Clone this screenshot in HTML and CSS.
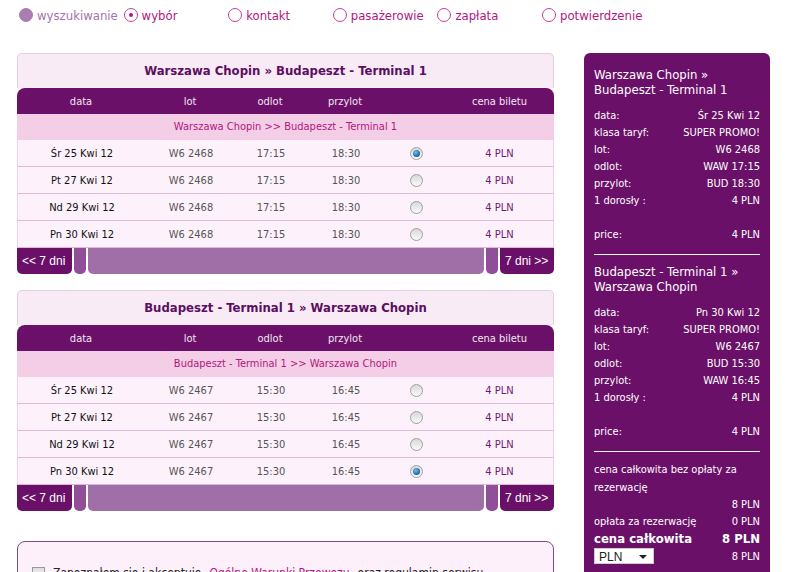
FILE: index.html
```html
<!DOCTYPE html>
<html lang="pl">
<head>
    <meta charset="UTF-8">
    <title>Wybór lotu</title>
    <link rel="stylesheet" href="styles.css">
</head>
<body>

    <!-- kroki rezerwacji -->
    <div class="steps">
        <div class="step done"><span class="dot"></span>wyszukiwanie</div>
        <div class="step active"><span class="dot"></span>wybór</div>
        <div class="step"><span class="dot"></span>kontakt</div>
        <div class="step"><span class="dot"></span>pasażerowie</div>
        <div class="step"><span class="dot"></span>zapłata</div>
        <div class="step"><span class="dot"></span>potwierdzenie</div>
    </div>

    <div class="main">
        <div class="left">

            <!-- wylot -->
            <div class="card">
                <div class="card-title">Warszawa Chopin » Budapeszt - Terminal 1</div>
                <div class="row head">
                    <div>data</div><div>lot</div><div>odlot</div><div>przylot</div><div></div><div>cena biletu</div>
                </div>
                <div class="route">Warszawa Chopin &gt;&gt; Budapeszt - Terminal 1</div>
                <div class="row">
                    <div class="date">Śr 25 Kwi 12</div><div>W6 2468</div><div>17:15</div><div>18:30</div>
                    <div><span class="radio checked"></span></div><div class="price">4 PLN</div>
                </div>
                <div class="row">
                    <div class="date">Pt 27 Kwi 12</div><div>W6 2468</div><div>17:15</div><div>18:30</div>
                    <div><span class="radio"></span></div><div class="price">4 PLN</div>
                </div>
                <div class="row">
                    <div class="date">Nd 29 Kwi 12</div><div>W6 2468</div><div>17:15</div><div>18:30</div>
                    <div><span class="radio"></span></div><div class="price">4 PLN</div>
                </div>
                <div class="row">
                    <div class="date">Pn 30 Kwi 12</div><div>W6 2468</div><div>17:15</div><div>18:30</div>
                    <div><span class="radio"></span></div><div class="price">4 PLN</div>
                </div>
                <div class="pager">
                    <a class="prev">&lt;&lt; 7 dni</a>
                    <span class="seg"></span>
                    <span class="bar"></span>
                    <span class="seg"></span>
                    <a class="next">7 dni &gt;&gt;</a>
                </div>
            </div>

            <!-- powrót -->
            <div class="card">
                <div class="card-title">Budapeszt - Terminal 1 » Warszawa Chopin</div>
                <div class="row head">
                    <div>data</div><div>lot</div><div>odlot</div><div>przylot</div><div></div><div>cena biletu</div>
                </div>
                <div class="route">Budapeszt - Terminal 1 &gt;&gt; Warszawa Chopin</div>
                <div class="row">
                    <div class="date">Śr 25 Kwi 12</div><div>W6 2467</div><div>15:30</div><div>16:45</div>
                    <div><span class="radio"></span></div><div class="price">4 PLN</div>
                </div>
                <div class="row">
                    <div class="date">Pt 27 Kwi 12</div><div>W6 2467</div><div>15:30</div><div>16:45</div>
                    <div><span class="radio"></span></div><div class="price">4 PLN</div>
                </div>
                <div class="row">
                    <div class="date">Nd 29 Kwi 12</div><div>W6 2467</div><div>15:30</div><div>16:45</div>
                    <div><span class="radio"></span></div><div class="price">4 PLN</div>
                </div>
                <div class="row">
                    <div class="date">Pn 30 Kwi 12</div><div>W6 2467</div><div>15:30</div><div>16:45</div>
                    <div><span class="radio checked"></span></div><div class="price">4 PLN</div>
                </div>
                <div class="pager">
                    <a class="prev">&lt;&lt; 7 dni</a>
                    <span class="seg"></span>
                    <span class="bar"></span>
                    <span class="seg"></span>
                    <a class="next">7 dni &gt;&gt;</a>
                </div>
            </div>

            <!-- warunki -->
            <div class="terms">
                <label><span class="check"></span>Zapoznałem się i akceptuję <span class="link">Ogólne Warunki Przewozu</span> oraz regulamin serwisu</label>
            </div>
        </div>

        <!-- podsumowanie -->
        <div class="summary">
            <div class="sum-title">Warszawa Chopin » Budapeszt - Terminal 1</div>
            <div class="sum-row"><span>data:</span><span>Śr 25 Kwi 12</span></div>
            <div class="sum-row"><span>klasa taryf:</span><span>SUPER PROMO!</span></div>
            <div class="sum-row"><span>lot:</span><span>W6 2468</span></div>
            <div class="sum-row"><span>odlot:</span><span>WAW 17:15</span></div>
            <div class="sum-row"><span>przylot:</span><span>BUD 18:30</span></div>
            <div class="sum-row"><span>1 dorosły :</span><span>4 PLN</span></div>
            <div class="sum-row"><span>&nbsp;</span></div>
            <div class="sum-row"><span>price:</span><span>4 PLN</span></div>
            <hr>
            <div class="sum-title">Budapeszt - Terminal 1 » Warszawa Chopin</div>
            <div class="sum-row"><span>data:</span><span>Pn 30 Kwi 12</span></div>
            <div class="sum-row"><span>klasa taryf:</span><span>SUPER PROMO!</span></div>
            <div class="sum-row"><span>lot:</span><span>W6 2467</span></div>
            <div class="sum-row"><span>odlot:</span><span>BUD 15:30</span></div>
            <div class="sum-row"><span>przylot:</span><span>WAW 16:45</span></div>
            <div class="sum-row"><span>1 dorosły :</span><span>4 PLN</span></div>
            <div class="sum-row"><span>&nbsp;</span></div>
            <div class="sum-row"><span>price:</span><span>4 PLN</span></div>
            <hr>
            <div class="total-note">cena całkowita bez opłaty za rezerwację</div>
            <div class="sum-row right"><span>8 PLN</span></div>
            <div class="sum-row"><span>opłata za rezerwację</span><span>0 PLN</span></div>
            <div class="sum-row total"><span>cena całkowita</span><span>8 PLN</span></div>
            <div class="sum-row"><span class="currency">PLN<i class="caret"></i></span><span>8 PLN</span></div>
        </div>
    </div>

</body>
</html>
```

FILE: styles.css
```css
body {
    margin: 0;
    font-family: Tahoma, "DejaVu Sans Condensed", "DejaVu Sans", sans-serif;
    font-size: 11px;
    background-color: #fff;
    color: #222;
}

/* kroki */
.steps {
    display: flex;
    align-items: flex-start;
    padding: 7px 0 0 19px;
    height: 53px;
    box-sizing: border-box;
}
.step {
    width: 104.6px;
    height: 16px;
    flex: none;
    display: flex;
    align-items: center;
    white-space: nowrap;
    font-size: 13px;
    color: #b2177f;
}
.step .dot {
    width: 12px;
    height: 12px;
    border: 1px solid #c4409c;
    border-radius: 50%;
    margin-right: 4px;
    flex: none;
    position: relative;
}
.step.done {
    color: #a274aa;
}
.step.done .dot {
    background-color: #a97db1;
    border-color: #a97db1;
}
.step.active .dot::after {
    content: "";
    position: absolute;
    left: 4px;
    top: 4px;
    width: 4px;
    height: 4px;
    border-radius: 50%;
    background-color: #b2177f;
}

.main {
    display: flex;
    gap: 30px;
    padding-left: 17px;
}
.left {
    width: 537px;
    flex: none;
}

/* karta lotu */
.card {
    margin-bottom: 16px;
}
.card-title {
    height: 34px;
    line-height: 34px;
    text-align: center;
    font-size: 13px;
    font-weight: bold;
    color: #5c0f5e;
    background-color: #f8ebf6;
    border: 1px solid #e3cfe0;
    border-bottom: none;
    border-radius: 5px 5px 0 0;
}
.row {
    display: grid;
    grid-template-columns: 128px 90px 70px 80px 60px 1fr;
    height: 26px;
    align-items: center;
    text-align: center;
    color: #555;
    background-color: #fdf2fb;
    border-left: 1px solid #ead4e6;
    border-right: 1px solid #ead4e6;
    border-bottom: 1px solid #dcbad7;
}
.row.head {
    background-color: #6a1068;
    color: #f3e6f2;
    border: none;
    border-radius: 8px 8px 0 0;
}
.row .date {
    color: #111;
}
.row .price {
    color: #6e1a6c;
}
.route {
    height: 26px;
    line-height: 26px;
    text-align: center;
    background-color: #f4cde6;
    color: #b2177f;
}
.radio {
    display: inline-block;
    width: 11px;
    height: 11px;
    border: 1px solid #a0a0a0;
    border-radius: 50%;
    background: linear-gradient(#d8d8d8, #fafafa);
    vertical-align: middle;
    position: relative;
}
.radio.checked::after {
    content: "";
    position: absolute;
    left: 2px;
    top: 2px;
    width: 7px;
    height: 7px;
    border-radius: 50%;
    background: radial-gradient(circle at 40% 35%, #6ec0f0, #1d5f9a 70%);
}

.pager {
    display: flex;
    gap: 2px;
    height: 26px;
}
.pager a {
    background-color: #6a1068;
    color: #fff;
    font-family: "Liberation Sans", Arial, sans-serif;
    font-size: 12px;
    line-height: 26px;
    padding: 0 5px;
    box-sizing: border-box;
}
.pager .prev {
    width: 55px;
    border-radius: 0 0 5px 5px;
}
.pager .next {
    width: 54px;
    border-radius: 0 0 5px 5px;
}
.pager .seg {
    width: 12px;
    background-color: #924f99;
    border-radius: 0 0 5px 5px;
}
.pager .bar {
    flex: 1;
    background-color: #a06fa7;
    border-radius: 0 0 5px 5px;
}

/* warunki */
.terms {
    margin-top: 30px;
    border: 1px solid #7b4f82;
    border-radius: 8px;
    background-color: #fdf0fb;
    padding: 24px 14px 20px;
    font-size: 12px;
}
.terms label {
    display: flex;
    align-items: center;
    gap: 8px;
}
.check {
    width: 11px;
    height: 11px;
    border: 1px solid #999;
    background: linear-gradient(#ddd, #fff);
}
.link {
    color: #b2177f;
}

/* podsumowanie */
.summary {
    width: 166px;
    flex: none;
    background-color: #6a1068;
    color: #fff;
    padding: 14px 10px 30px;
    border-radius: 6px 6px 0 0;
}
.sum-title {
    font-size: 13px;
    line-height: 15px;
    margin-bottom: 10px;
}
.sum-row {
    display: flex;
    justify-content: space-between;
    line-height: 17px;
}
.sum-row.right {
    justify-content: flex-end;
    line-height: 16px;
}
.summary hr {
    border: none;
    border-top: 1px solid #fff;
    margin: 11px 0 9px;
}
.total-note {
    width: 155px;
    line-height: 18px;
}
.sum-row.total {
    font-size: 13px;
    font-weight: bold;
    line-height: 18px;
}
.currency {
    background-color: #fff;
    color: #222;
    width: 60px;
    height: 16px;
    line-height: 16px;
    padding-left: 4px;
    box-sizing: border-box;
    font-family: "Liberation Sans", Arial, sans-serif;
    font-size: 12px;
    position: relative;
    border: 1px solid #ccc;
}
.caret {
    position: absolute;
    right: 6px;
    top: 6px;
    border-left: 4px solid transparent;
    border-right: 4px solid transparent;
    border-top: 4px solid #222;
}
```
